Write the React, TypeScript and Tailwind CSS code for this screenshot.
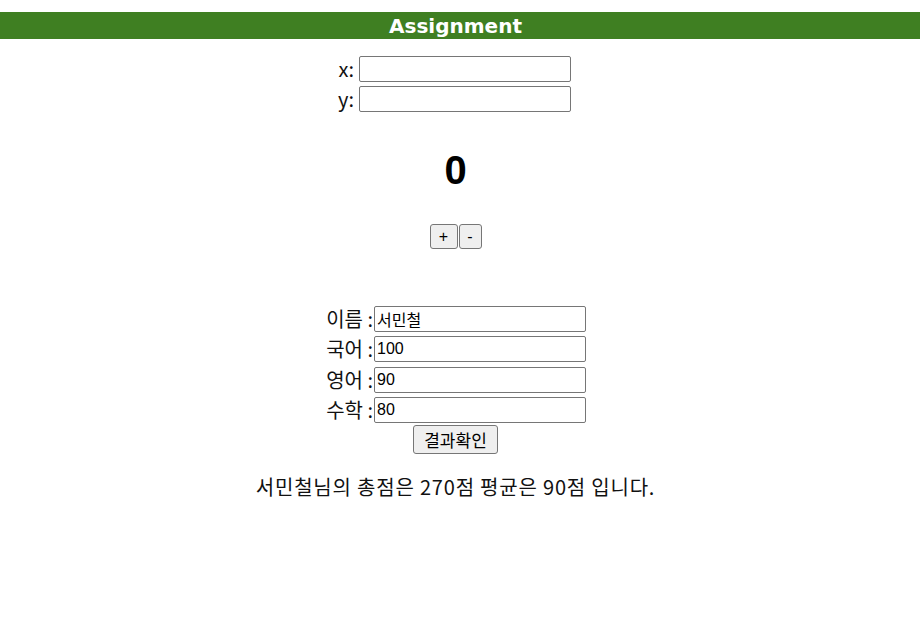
import React from "react";

const lab = "font-['Noto_Sans_CJK_KR','Noto_Sans',sans-serif] text-[20px] leading-[26px] text-[#111]";
const inp = "w-[212px] h-[26px] border border-[#767676] rounded-[2px] bg-white px-[2px] text-[16px] font-['Liberation_Sans','Noto_Sans_CJK_KR',sans-serif] text-black outline-none";
const btn = "h-[25px] border border-[#767676] rounded-[3px] bg-[#efefef] text-[16px] leading-none text-black font-['Liberation_Sans',sans-serif] flex items-center justify-center";

function Row({ label, value }: { label: string; value: string }) {
  return (
    <div className="flex items-center justify-end w-[261px] h-[26px]">
      <span className={lab + " mr-[1px]"}>{label}</span>
      <input className={inp} defaultValue={value} />
    </div>
  );
}

export default function App() {
  return (
    <div className="w-[920px] h-[621px] bg-white overflow-hidden">
      <div className="h-[12px]" />
      <div className="h-[27px] bg-[#3f7f22] flex items-center justify-center pr-[9px]">
        <span className="text-white font-bold text-[20px] leading-none font-['DejaVu_Sans',Verdana,sans-serif]">Assignment</span>
      </div>
      <div className="flex flex-col items-center pr-[9px]">
        <div className="mt-[17px] w-[231px] flex flex-col gap-[4px]">
          <div className="flex items-center justify-end h-[26px]">
            <span className={lab + " mr-[5px]"}>x:</span>
            <input className={inp} />
          </div>
          <div className="flex items-center justify-end h-[26px]">
            <span className={lab + " mr-[5px]"}>y:</span>
            <input className={inp} />
          </div>
        </div>
        <div className="mt-[38px] h-[40px] text-[40px] leading-[40px] font-bold font-['Liberation_Sans',sans-serif] text-black">0</div>
        <div className="mt-[34px] flex gap-[1px]">
          <button className={btn + " w-[28px]"}>+</button>
          <button className={btn + " w-[23px]"}>-</button>
        </div>
        <div className="mt-[57px] flex flex-col">
          <Row label="이름 :" value="서민철" />
          <div className="h-[4px]" />
          <Row label="국어 :" value="100" />
          <div className="h-[5px]" />
          <Row label="영어 :" value="90" />
          <div className="h-[4px]" />
          <Row label="수학 :" value="80" />
        </div>
        <button className="mt-[2px] w-[85px] h-[29px] border border-[#767676] rounded-[3px] bg-[#efefef] text-[17px] leading-none text-black font-['Noto_Sans_CJK_KR',sans-serif] flex items-center justify-center">결과확인</button>
        <div className="mt-[19px] h-[28px] text-[20px] leading-[28px] tracking-[0.8px] text-[#111] font-['Noto_Sans_CJK_KR','Noto_Sans',sans-serif]">
          서민철님의 총점은 270점 평균은 90점 입니다.
        </div>
      </div>
    </div>
  );
}
